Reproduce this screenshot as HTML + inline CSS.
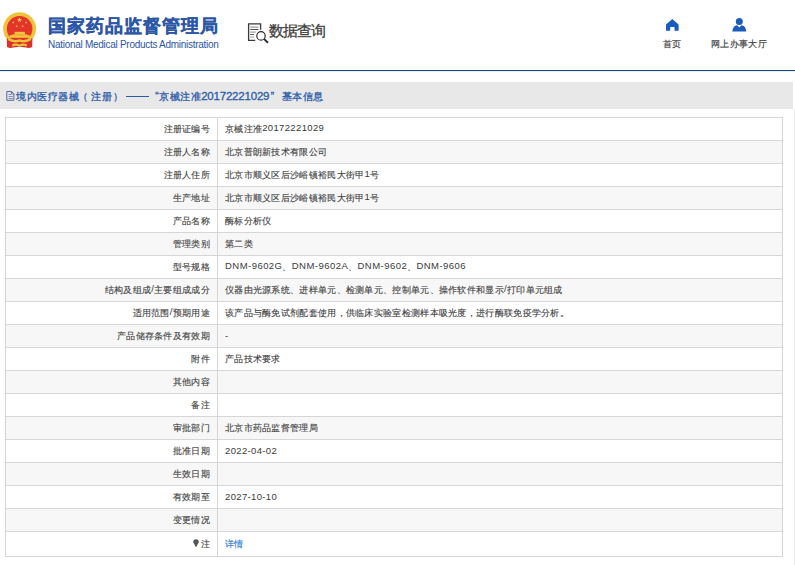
<!DOCTYPE html>
<html><head><meta charset="utf-8">
<style>
*{margin:0;padding:0;box-sizing:border-box}
html,body{width:795px;height:565px;overflow:hidden;background:#fff;font-family:"Liberation Sans",sans-serif;color:#333}
#hdr{position:absolute;left:0;top:0;width:795px;height:70px;background:#fff}
#emblem{position:absolute;left:0;top:0;width:40px;height:52px}
#t1{position:absolute;left:48px;top:13.3px;font-size:18px;letter-spacing:1px;font-weight:bold;-webkit-text-stroke:0.25px #2c56a6;color:#2c56a6;white-space:nowrap;line-height:26px}
#t2{position:absolute;left:48px;top:38.8px;font-size:10px;letter-spacing:-0.28px;color:#2c56a6;white-space:nowrap;line-height:12px}
#sq{position:absolute;left:244px;top:20px;width:28px;height:26px}
#sqt{position:absolute;left:268.8px;top:20px;font-size:15px;letter-spacing:-1px;color:#3a3a3a;-webkit-text-stroke:0.3px #444;line-height:22px;white-space:nowrap}
.nav{position:absolute;top:17px;text-align:center;font-size:9px;letter-spacing:0.4px;color:#3a3a3a;-webkit-text-stroke:0.2px #555;white-space:nowrap;line-height:12px}
#line1{position:absolute;left:0;top:70px;width:795px;height:1px;background:#1f4677}
#line2{position:absolute;left:0;top:71px;width:795px;height:1px;background:#e2f4fb}
#bar{position:absolute;left:0;top:82px;width:793px;height:27px;background:#e8e8e8}
.bt{position:absolute;top:82.5px;line-height:27px;font-size:10px;letter-spacing:0.5px;color:#2b5ba8;white-space:nowrap;-webkit-text-stroke:0.3px #2b5ba8}
.bn{font-size:11.5px;letter-spacing:-0.2px}
#vl{position:absolute;left:794px;top:109px;width:1px;height:456px;background:#efefef}
table{position:absolute;left:5px;top:117px;width:778px;border-collapse:collapse;border:1px solid #d6d6d6}
td{height:23px;border-top:1px solid #d6d6d6;font-size:9px;letter-spacing:0.3px;color:#333;-webkit-text-stroke:0.15px #666;white-space:nowrap;padding:0}
.n{font-size:9.5px;letter-spacing:0.35px;-webkit-text-stroke:0;color:#3a3a3a;position:relative;top:-0.7px}
td.l{width:212px;text-align:right;padding-right:7px;border-right:1px solid #d6d6d6}
td.v{padding-left:7px}
tr:nth-child(even) td{background:#f7f7f7}
a{color:#3b7fd8;-webkit-text-stroke:0.2px #3b7fd8;text-decoration:none}
tr.last td{height:25px}
</style></head><body>
<div id="hdr">
  <svg id="emblem" viewBox="0 0 40 52">
    <circle cx="19.6" cy="28.7" r="16.5" fill="#f1c33a"/>
    <circle cx="19.6" cy="28.7" r="12.8" fill="#e4352a"/>
    <path d="M6.8 38.5 L32.4 38.5 L32.2 47 Q29 48.6 26 47.6 L19.6 46.8 L13.2 47.6 Q10 48.6 7 47 Z" fill="#d93129"/>
    <polygon points="19.50,17.30 20.12,19.05 21.97,19.10 20.50,20.22 21.03,22.00 19.50,20.95 17.97,22.00 18.50,20.22 17.03,19.10 18.88,19.05" fill="#f8d64a"/>
    <polygon points="13.20,21.10 13.52,21.96 14.44,22.00 13.72,22.57 13.96,23.45 13.20,22.95 12.44,23.45 12.68,22.57 11.96,22.00 12.88,21.96" fill="#f5cf45"/>
    <polygon points="26.10,21.10 26.42,21.96 27.34,22.00 26.62,22.57 26.86,23.45 26.10,22.95 25.34,23.45 25.58,22.57 24.86,22.00 25.78,21.96" fill="#f5cf45"/>
    <polygon points="16.70,25.00 17.02,25.86 17.94,25.90 17.22,26.47 17.46,27.35 16.70,26.85 15.94,27.35 16.18,26.47 15.46,25.90 16.38,25.86" fill="#f5cf45"/>
    <polygon points="22.60,25.00 22.92,25.86 23.84,25.90 23.12,26.47 23.36,27.35 22.60,26.85 21.84,27.35 22.08,26.47 21.36,25.90 22.28,25.86" fill="#f5cf45"/>
    <rect x="14.6" y="31.8" width="10.3" height="2.6" fill="#f3c63e"/>
    <rect x="12.5" y="34.3" width="14.6" height="0.9" fill="#f3c63e"/>
    <rect x="9.8" y="35.1" width="19.9" height="2.7" fill="#f3c63e"/>
    <path d="M8 37.6 Q14 41.5 19.6 39.3 Q25 41.5 31.2 37.6 L31 40.2 Q25 43.5 19.6 41.8 Q14 43.5 8.2 40.2 Z" fill="#f1c33a"/>
    <path d="M12 44.3 Q16 42.6 19.6 44.6 Q23 42.6 27 44.3 L26.6 46.4 Q23 44.8 19.6 46.8 Q16 44.8 12.4 46.4 Z" fill="#f1c33a"/>
  </svg>
  <div id="t1">国家药品监督管理局</div>
  <div id="t2">National Medical Products Administration</div>
  <svg id="sq" viewBox="244 20 28 26">
    <path d="M255.2 40.3 L248.6 40.3 L248.6 23.9 L260.6 23.9 L260.6 29.8" fill="none" stroke="#3a3a3a" stroke-width="1.3"/>
    <rect x="250.2" y="26.6" width="8.3" height="1" fill="#888"/>
    <rect x="250.2" y="29.1" width="8.3" height="0.9" fill="#444"/>
    <rect x="250.2" y="31.6" width="5.5" height="1" fill="#888"/>
    <rect x="250.2" y="34.1" width="4" height="0.9" fill="#444"/>
    <rect x="250.2" y="36.6" width="4" height="1" fill="#999"/>
    <circle cx="261" cy="35.9" r="4.2" fill="#fff" stroke="#2a2a2a" stroke-width="1.2"/>
    <line x1="264" y1="38.9" x2="268" y2="42.8" stroke="#2a2a2a" stroke-width="1.9"/>
  </svg>
  <div id="sqt">数据查询</div>
  <div class="nav" style="left:652px;width:40px">
    <svg width="13" height="12" viewBox="0 0 13 12" style="display:block;margin:2px 0 6.5px 14px"><path d="M6.3 0 L12.6 5.4 L12.6 11.8 L8.5 11.8 L8.5 7.9 L4.2 7.9 L4.2 11.8 L0 11.8 L0 5.4Z" fill="#1a5cbd"/></svg>
    首页
  </div>
  <div class="nav" style="left:704px;width:70px">
    <svg width="15" height="14" viewBox="0 0 15 14" style="display:block;margin:1px 0 6px 27.5px"><circle cx="7.3" cy="3.6" r="3.5" fill="#1a5cbd"/><path d="M0.3 13.6 Q0.8 7.6 5.2 7.2 L7.3 9.6 L9.4 7.2 Q13.8 7.6 14.3 13.6Z" fill="#1a5cbd"/></svg>
    网上办事大厅
  </div>
</div>
<div id="line1"></div><div id="line2"></div>
<div id="bar"></div>
<svg style="position:absolute;left:0;top:84px" width="20" height="20" viewBox="0 84 20 20"><path d="M6.8 91.5 L11.6 91.5 L13.9 93.8 L13.9 100.3 L6.8 100.3 Z" fill="none" stroke="#5468a0" stroke-width="1"/><path d="M11.4 91.6 L11.4 94 L13.8 94" fill="none" stroke="#5468a0" stroke-width="0.9"/><rect x="8.5" y="94" width="2.5" height="1" fill="#8090bb"/><rect x="8.5" y="96" width="4.3" height="1" fill="#8090bb"/><rect x="8.5" y="98" width="4.3" height="1" fill="#8090bb"/></svg>
<div class="bt" style="left:16px">境内医疗器械</div>
<div class="bt" style="left:77.9px">（</div>
<div class="bt" style="left:91px">注册</div>
<div class="bt" style="left:113.1px">）</div>
<div style="position:absolute;left:125.5px;top:96px;width:23.5px;height:1px;background:#2b5ba8"></div>
<div class="bt" style="left:155.3px">“京械注准<span class="bn">20172221029</span><span style="margin-left:1.4px">”</span></div>
<div class="bt" style="left:281.5px">基本信息</div>
<div id="vl"></div>
<table>
<tr><td class="l">注册证编号</td><td class="v">京械注准<span class="n">20172221029</span></td></tr>
<tr><td class="l">注册人名称</td><td class="v">北京普朗新技术有限公司</td></tr>
<tr><td class="l">注册人住所</td><td class="v">北京市顺义区后沙峪镇裕民大街甲<span class="n">1</span>号</td></tr>
<tr><td class="l">生产地址</td><td class="v">北京市顺义区后沙峪镇裕民大街甲<span class="n">1</span>号</td></tr>
<tr><td class="l">产品名称</td><td class="v">酶标分析仪</td></tr>
<tr><td class="l">管理类别</td><td class="v">第二类</td></tr>
<tr><td class="l">型号规格</td><td class="v"><span class="n" style="letter-spacing:0.46px">DNM-9602G</span>、<span class="n" style="letter-spacing:0.46px">DNM-9602A</span>、<span class="n" style="letter-spacing:0.46px">DNM-9602</span>、<span class="n" style="letter-spacing:0.46px">DNM-9606</span></td></tr>
<tr><td class="l">结构及组成<span class="n">/</span>主要组成成分</td><td class="v">仪器由光源系统、进样单元、检测单元、控制单元、操作软件和显示<span class="n">/</span>打印单元组成</td></tr>
<tr><td class="l">适用范围<span class="n">/</span>预期用途</td><td class="v">该产品与酶免试剂配套使用，供临床实验室检测样本吸光度，进行酶联免疫学分析。</td></tr>
<tr><td class="l">产品储存条件及有效期</td><td class="v"><span class="n">-</span></td></tr>
<tr><td class="l">附件</td><td class="v">产品技术要求</td></tr>
<tr><td class="l">其他内容</td><td class="v"></td></tr>
<tr><td class="l">备注</td><td class="v"></td></tr>
<tr><td class="l">审批部门</td><td class="v">北京市药品监督管理局</td></tr>
<tr><td class="l">批准日期</td><td class="v"><span class="n">2022-04-02</span></td></tr>
<tr><td class="l">生效日期</td><td class="v"></td></tr>
<tr><td class="l">有效期至</td><td class="v"><span class="n">2027-10-10</span></td></tr>
<tr><td class="l">变更情况</td><td class="v"></td></tr>
<tr class="last"><td class="l"><svg width="6.4" height="8.2" viewBox="0 0 7 9" style="vertical-align:-1px;margin-right:1.6px"><path d="M3.3 0.3 C5.3 0.3 6.3 1.6 6.3 3.2 C6.3 4.6 5.2 5.4 4.6 6.6 L4.3 7.6 L2.3 7.6 L2 6.6 C1.4 5.4 0.3 4.6 0.3 3.2 C0.3 1.6 1.3 0.3 3.3 0.3Z" fill="#555"/><rect x="2.4" y="7.9" width="1.8" height="0.9" fill="#888"/></svg>注</td><td class="v"><a>详情</a></td></tr>
</table>
</body></html>
